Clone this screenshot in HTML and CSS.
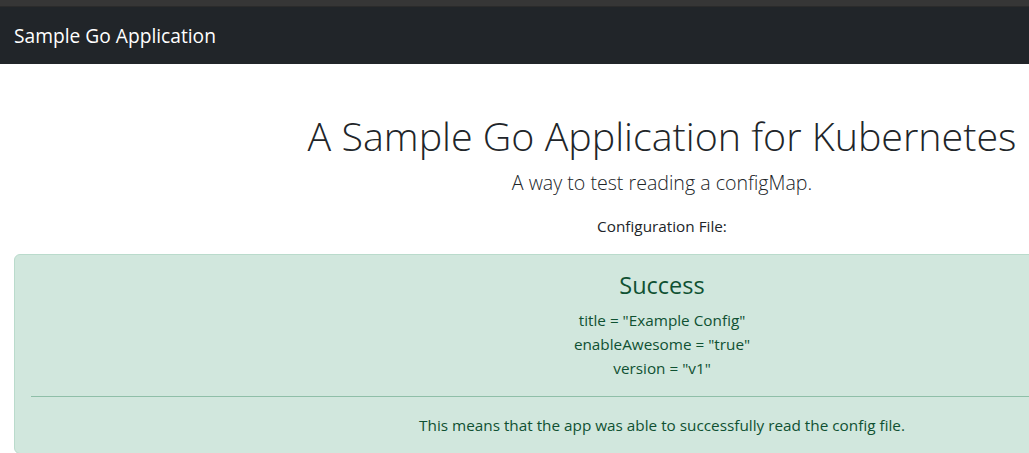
FILE: index.html
```html
<!DOCTYPE html>
<html lang="en">
<head>
<meta charset="utf-8">
<title>Sample Go Application</title>
<link rel="stylesheet" href="styles.css">
</head>
<body>
<div class="chrome"></div>
<nav class="navbar">
  <span class="brand">Sample Go Application</span>
</nav>
<main class="container">
  <h1 class="title">A Sample Go Application for Kubernetes</h1>
  <p class="lead">A way to test reading a configMap.</p>
  <p class="label">Configuration File:</p>
  <div class="alert">
    <h4 class="alert-heading">Success</h4>
    <div class="config">
      <div>title = "Example Config"</div>
      <div>enableAwesome = "true"</div>
      <div>version = "v1"</div>
    </div>
    <hr class="divider">
    <p class="note">This means that the app was able to successfully read the config file.</p>
  </div>
</main>
</body>
</html>
```
FILE: styles.css
```css
html, body {
  margin: 0;
  padding: 0;
  overflow: hidden;
}
body {
  font-family: "Open Sans", "Noto Sans", sans-serif;
  font-size: 15.3px;
  line-height: 24px;
  color: #212529;
  background: #fff;
}
.chrome {
  height: 6px;
  background: #363636;
  border-bottom: 1px solid #2b2b2b;
}
.navbar {
  background: #212529;
  height: 57px;
  display: flex;
  align-items: center;
  padding: 1px 14px 0;
  box-sizing: border-box;
  width: 1400px;
}
.brand {
  color: #fff;
  font-size: 19.2px;
  line-height: 30px;
}
.container {
  width: 1296px;
  margin-left: 14px;
  text-align: center;
  padding-top: 48px;
}
.title {
  font-size: 39.4px;
  font-weight: 300;
  line-height: 48px;
  margin: 0 0 8px;
}
.lead {
  font-size: 19.6px;
  font-weight: 300;
  line-height: 30px;
  margin: 0 0 16px;
}
.label {
  margin: 0 0 16px;
}
.alert {
  background: #d1e7dd;
  border: 1px solid #badbcc;
  border-radius: 6px;
  color: #0f5132;
  padding: 16px;
  text-align: center;
}
.alert-heading {
  font-size: 23.5px;
  font-weight: 400;
  line-height: 29px;
  margin: 0 0 8px;
}
.divider {
  border: 0;
  border-top: 1px solid #8fbfa8;
  margin: 16px 0;
}
.note {
  margin: 0;
}
```
